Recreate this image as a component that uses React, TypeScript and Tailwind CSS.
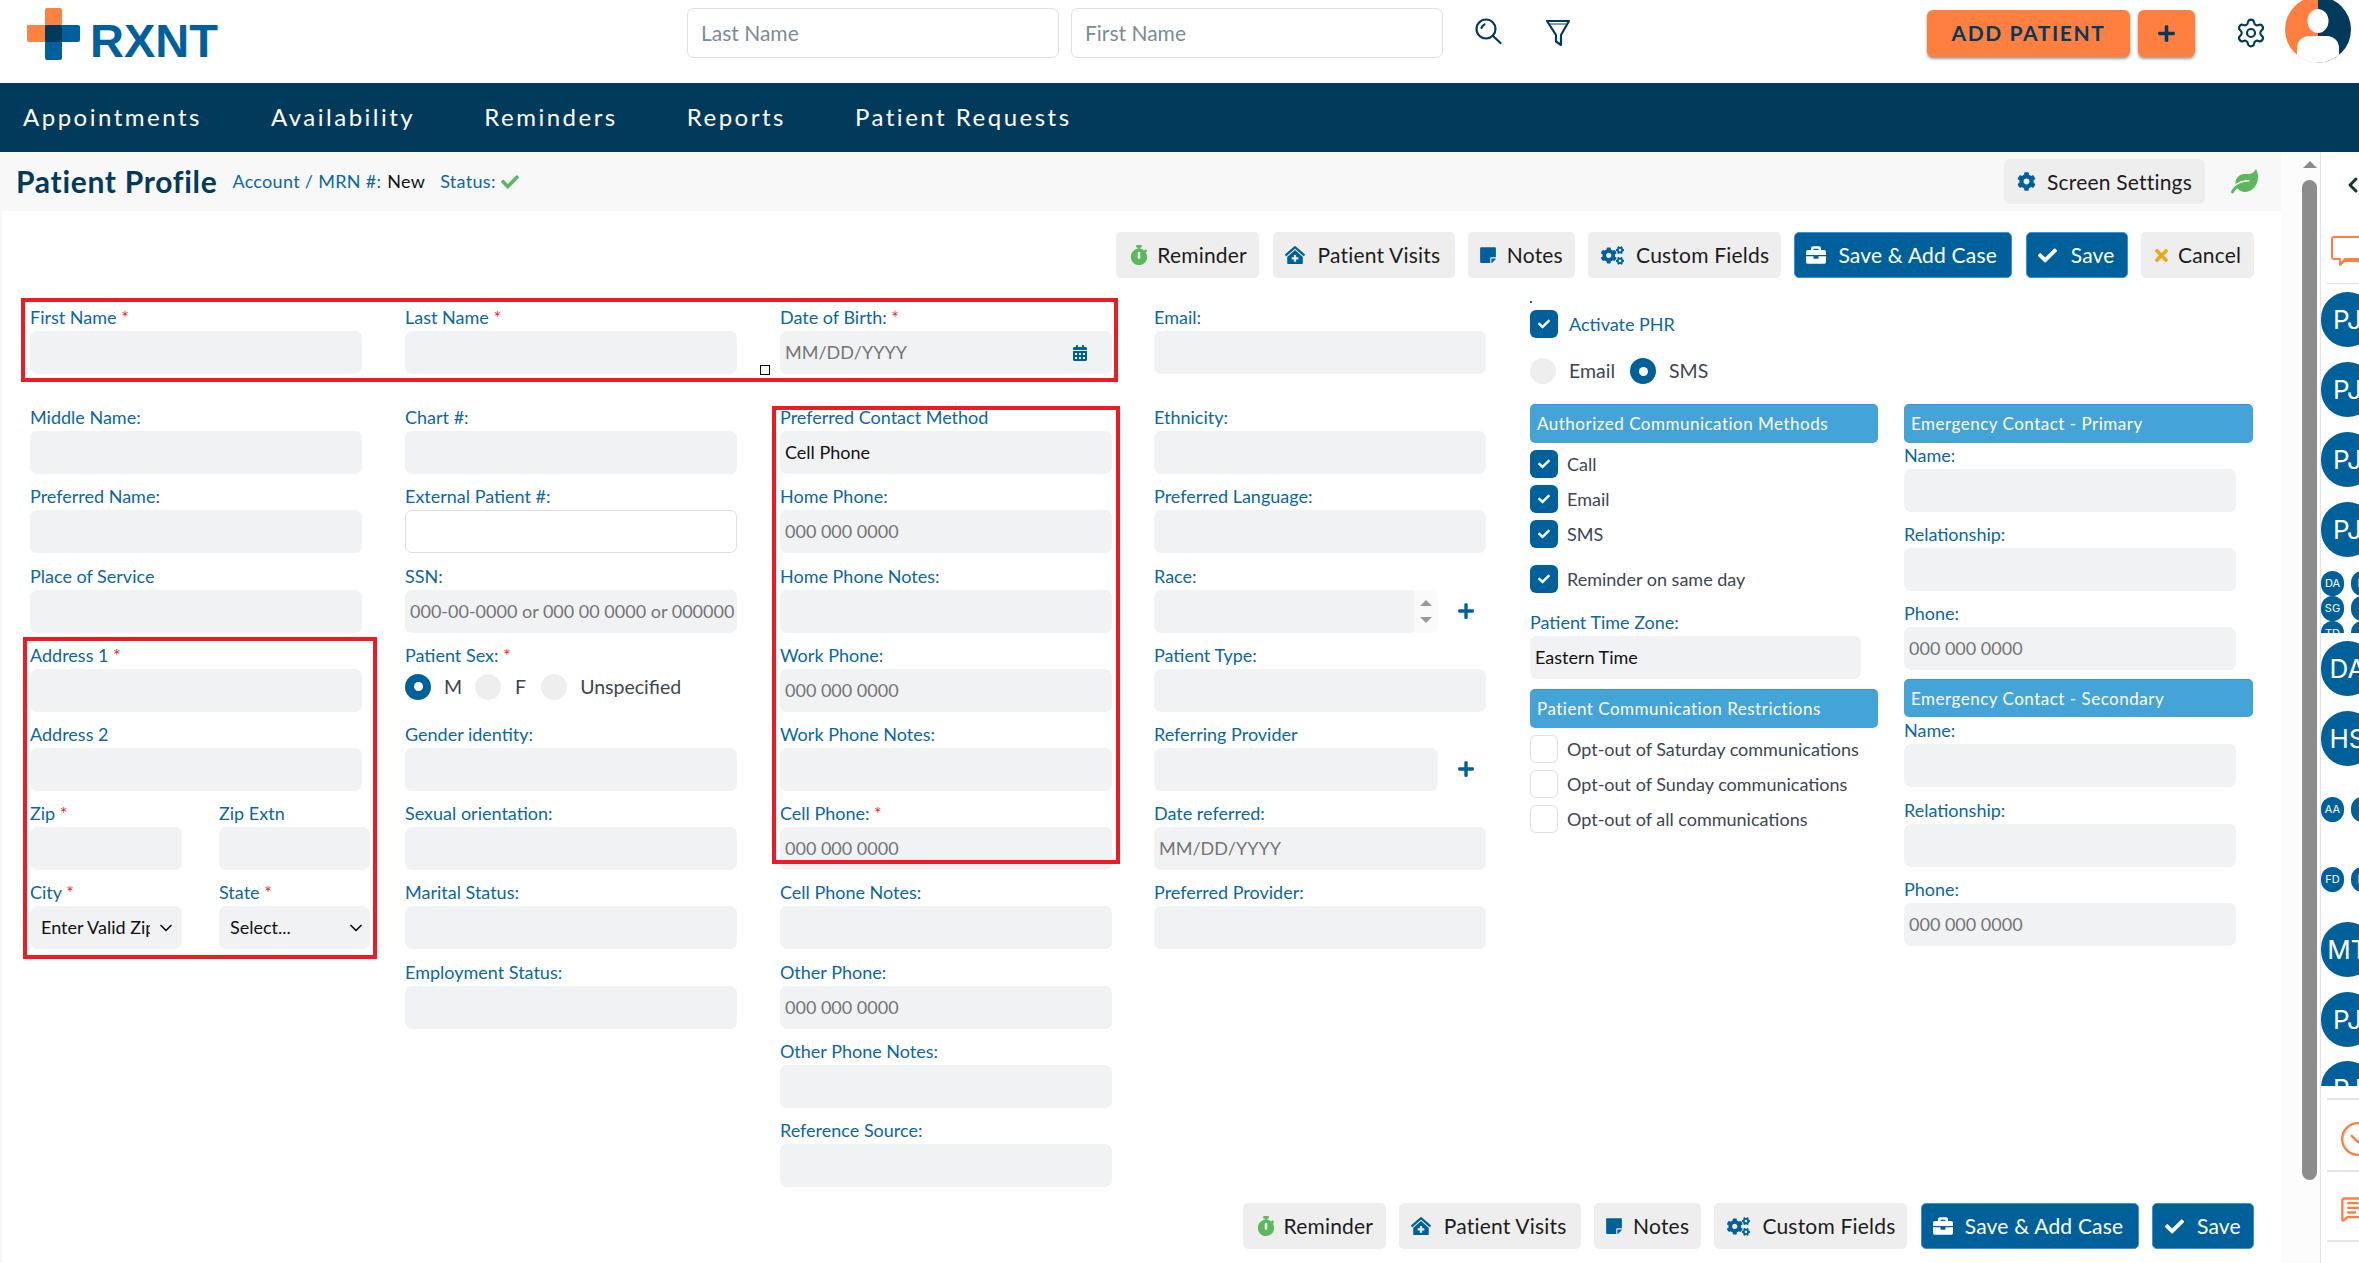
import React from "react";
import { FaStopwatch, FaClinicMedical, FaStickyNote, FaCogs, FaBriefcase, FaCheck, FaTimes, FaCog, FaLeaf, FaCalendarAlt, FaPlus } from "react-icons/fa";
import { Settings, ChevronDown, ChevronLeft, CircleChevronDown, MessageSquareText } from "lucide-react";

const BLUE = "text-[#0b67a3]";

function Label({ text, req }: { text: string; req?: boolean }) {
  return (
    <div className={`h-[25px] text-[18px] leading-[23px] whitespace-nowrap ${BLUE}`}>
      {text}
      {req && <span className="text-[#f0202c]"> *</span>}
    </div>
  );
}

function Box({ ph, value, white, className = "", children }: { ph?: string; value?: string; white?: boolean; className?: string; children?: React.ReactNode }) {
  return (
    <div className={`h-[43px] rounded-[7px] flex items-center px-[5px] overflow-hidden whitespace-nowrap text-[18px] ${white ? "bg-white border border-[#dcdfe3]" : "bg-[#f1f2f4]"} ${value ? "text-[#111]" : "text-[#757575]"} ${className}`}>
      {value || ph}
      {children}
    </div>
  );
}

type F = { label: string; req?: boolean; ph?: string; value?: string; white?: boolean };

function Field({ f, width = "w-full" }: { f: F; width?: string }) {
  return (
    <div className="h-[79.2px]">
      <Label text={f.label} req={f.req} />
      <Box ph={f.ph} value={f.value} white={f.white} className={width} />
    </div>
  );
}

const PHONE = "000 000 0000";

const col2: F[] = [
  { label: "Chart #:" },
  { label: "External Patient #:", white: true },
];
const col2b: F[] = [{ label: "Gender identity:" }, { label: "Sexual orientation:" }, { label: "Marital Status:" }, { label: "Employment Status:" }];
const col3: F[] = [
  { label: "Preferred Contact Method", value: "Cell Phone" },
  { label: "Home Phone:", ph: PHONE },
  { label: "Home Phone Notes:" },
  { label: "Work Phone:", ph: PHONE },
  { label: "Work Phone Notes:" },
  { label: "Cell Phone:", req: true, ph: PHONE },
  { label: "Cell Phone Notes:" },
  { label: "Other Phone:", ph: PHONE },
  { label: "Other Phone Notes:" },
  { label: "Reference Source:" },
];

function Radio({ on }: { on?: boolean }) {
  return (
    <span className={`w-[26px] h-[26px] rounded-full flex items-center justify-center shrink-0 ${on ? "bg-[#00619a]" : "bg-[#eeeeee]"}`}>
      {on && <span className="w-[9px] h-[9px] rounded-full bg-white" />}
    </span>
  );
}

function Check({ on, label, blue }: { on?: boolean; label: string; blue?: boolean }) {
  return (
    <div className={`h-[28px] flex items-center ${blue ? "gap-[11px]" : "gap-[9px]"}`}>
      <span className={`w-[28px] h-[28px] rounded-[6px] flex items-center justify-center shrink-0 ${on ? "bg-[#00619a]" : "bg-white border border-[#dcdfe3]"}`}>
        {on && <FaCheck className="text-white text-[12px]" />}
      </span>
      <span className={`text-[18px] whitespace-nowrap ${blue ? BLUE : "text-[#3c4650]"}`}>{label}</span>
    </div>
  );
}

function SectionHead({ text, className = "" }: { text: string; className?: string }) {
  return (
    <div className={`h-[39px] rounded-[5px] bg-[#44a4d8] border-t border-[#3b97cb] flex items-center pl-[7px] text-white text-[17px] tracking-[0.5px] whitespace-nowrap ${className}`}>
      {text}
    </div>
  );
}

function Btn({ cls, icon, text, primary }: { cls: string; icon: React.ReactNode; text: string; primary?: boolean }) {
  return (
    <button className={`${cls} h-[46px] rounded-[5px] flex items-center text-[21px] tracking-[0.2px] whitespace-nowrap ${primary ? "bg-[#00619a] border border-[#3f8fe0] text-white" : "bg-[#eeeeee] text-[#1c1c1c]"}`}>
      <span className="w-[24px] flex justify-center shrink-0">{icon}</span>
      {text}
    </button>
  );
}

function Actions({ cancel }: { cancel?: boolean }) {
  return (
    <div className="flex justify-end gap-[13.3px] pr-[27px]">
      <Btn cls="w-[143px] pl-[11px] gap-[6px]" icon={<FaStopwatch className="text-[#5cb85c] text-[20px]" />} text="Reminder" />
      <Btn cls="w-[182px] pl-[10px] gap-[11px]" icon={<FaClinicMedical className="text-[#00619a] text-[20px]" />} text="Patient Visits" />
      <Btn cls="w-[107px] pl-[8px] gap-[7px]" icon={<FaStickyNote className="text-[#00619a] text-[18px]" />} text="Notes" />
      <Btn cls="w-[193px] pl-[12px] gap-[12px]" icon={<FaCogs className="text-[#00619a] text-[23px]" />} text="Custom Fields" />
      <Btn cls="w-[218px] pl-[9px] gap-[10px]" primary icon={<FaBriefcase className="text-white text-[20px]" />} text="Save &amp; Add Case" />
      <Btn cls="w-[102px] pl-[9px] gap-[11px]" primary icon={<FaCheck className="text-white text-[19px]" />} text="Save" />
      {cancel && <Btn cls="w-[113px] pl-[8px] gap-[5px]" icon={<FaTimes className="text-[#eea51b] text-[19px]" />} text="Cancel" />}
    </div>
  );
}

function BigAv({ t, clip }: { t: string; clip?: boolean }) {
  return (
    <div className={`${clip ? "h-[25px] overflow-hidden" : "h-[55px]"} w-[53px] shrink-0`}>
      <div className="w-[53px] h-[55px] rounded-full bg-[#00619a] text-white text-[26px] flex items-center justify-center font-['Inter',sans-serif]">{t}</div>
    </div>
  );
}

function SmallAv({ t }: { t: string }) {
  return <div className="w-[23px] h-[25px] rounded-full bg-[#00619a] text-white text-[11px] flex items-center justify-center shrink-0 font-['Inter',sans-serif]">{t}</div>;
}

function SmallRow({ a, b, mb = "" }: { a: string; b: string; mb?: string }) {
  return (
    <div className={`flex gap-[7px] ${mb}`}>
      <SmallAv t={a} />
      <SmallAv t={b} />
    </div>
  );
}

export default function App() {
  return (
    <div className="w-[2359px] h-[1263px] overflow-hidden bg-white flex flex-col font-['Lato','Noto_Sans',sans-serif]">
      {/* top bar */}
      <header className="h-[83px] shrink-0 bg-white pt-[8px]">
        <div className="h-[50px] flex items-center">
          <div className="w-[687px] self-start flex items-start pl-[27px] shrink-0">
            <svg width="53" height="52" viewBox="0 0 53 52">
              <path d="M18 2a2 2 0 0 1 2-2h13a2 2 0 0 1 2 2v32H2a2 2 0 0 1-2-2V17h18z" fill="#ff8243" />
              <path d="M18 17h33a2 2 0 0 1 2 2v13a2 2 0 0 1-2 2H35v16a2 2 0 0 1-2 2H20a2 2 0 0 1-2-2z" fill="#00619a" />
              <rect x="18" y="17" width="17" height="17" rx="3" fill="#04395c" />
            </svg>
            <span className="ml-[10px] mt-[11px] text-[47px] leading-[44px] font-bold text-[#00619a] font-['Liberation_Sans',sans-serif]">RXNT</span>
          </div>
          <Box ph="Last Name" white className="w-[372px] !h-[50px] !px-[13px] !text-[21px] !text-[#7c8b97] mr-[12px]" />
          <Box ph="First Name" white className="w-[372px] !h-[50px] !px-[13px] !text-[21px] !text-[#7c8b97]" />
          <svg className="ml-[31px] shrink-0" width="30" height="30" viewBox="0 0 30 30" fill="none" stroke="#023a5c" strokeWidth="2.2" strokeLinecap="round">
            <circle cx="12" cy="11" r="9.5" />
            <path d="M7.5 10a5 5 0 0 1 3-3.5" />
            <path d="M19 18l7.5 7" />
          </svg>
          <svg className="ml-[42px] shrink-0" width="24" height="30" viewBox="0 0 24 30" fill="none" stroke="#023a5c" strokeWidth="2.2" strokeLinejoin="round">
            <path d="M1 3h22l-8 14v10l-5-3.500V17z" />
            <path d="M4 6h16" strokeWidth="1" />
          </svg>
          <button className="ml-[357px] w-[203px] h-[47px] rounded-[6px] bg-[#ff7f41] shadow-[0_2px_3px_rgba(0,0,0,0.4)] text-[#023a5c] text-[21px] font-bold tracking-[1.6px]">ADD PATIENT</button>
          <button className="ml-[8px] w-[57px] h-[47px] rounded-[6px] bg-[#ff7f41] shadow-[0_2px_3px_rgba(0,0,0,0.4)] flex items-center justify-center text-[#023a5c]"><FaPlus className="text-[19px]" /></button>
          <Settings className="ml-[40px] text-[#023a5c]" size={32} strokeWidth={1.6} />
          <svg className="ml-[18px] self-start mt-[-12px] shrink-0" width="66" height="67" viewBox="0 0 66 67">
            <defs>
              <clipPath id="av"><circle cx="33" cy="33.5" r="33" /></clipPath>
            </defs>
            <g clipPath="url(#av)">
              <rect width="33" height="67" fill="#ff7f41" />
              <rect x="33" width="33" height="67" fill="#023a5c" />
              <ellipse cx="33" cy="25" rx="10.500" ry="12" fill="#fff" />
              <rect x="12" y="40" width="42" height="30" rx="12" fill="#fff" />
            </g>
          </svg>
        </div>
      </header>

      {/* nav */}
      <nav className="h-[69px] shrink-0 bg-[#023a5c] flex items-center pl-[23px] pb-[1px] gap-[69px] text-white text-[24px] tracking-[2.5px]">
        {["Appointments", "Availability", "Reminders", "Reports", "Patient Requests"].map((t) => (
          <span key={t} className="whitespace-nowrap">{t}</span>
        ))}
      </nav>

      <div className="flex-1 flex min-h-0">
        {/* main */}
        <div className="w-[2281px] shrink-0 flex flex-col bg-[#f8f8f8]">
          <div className="h-[59px] shrink-0 flex items-center pl-[16px] pr-[23px]">
            <span className="text-[30px] font-bold text-[#023a5c] tracking-[0.7px] whitespace-nowrap">Patient Profile</span>
            <span className={`ml-[15px] text-[18px] tracking-[0.3px] whitespace-nowrap ${BLUE}`}>Account / MRN #:</span>
            <span className="ml-[6px] text-[18px] tracking-[0.3px] text-[#111]">New</span>
            <span className={`ml-[15px] text-[18px] tracking-[0.3px] ${BLUE}`}>Status:</span>
            <FaCheck className="ml-[5px] text-[#5cb85c] text-[18px]" />
            <div className="ml-auto flex items-center gap-[26px]">
              <button className="w-[201px] h-[45px] rounded-[6px] bg-[#eeeeee] flex items-center pl-[13px] gap-[11px] text-[21px] tracking-[0.2px] text-[#1c1c1c] whitespace-nowrap">
                <FaCog className="text-[#00619a] text-[19px]" />
                Screen Settings
              </button>
              <FaLeaf className="text-[#5cb85c] text-[27px]" />
            </div>
          </div>

          <div className="flex-1 ml-[2px] bg-white flex flex-col justify-between pt-[21px] pb-[14px] relative">
            <div>
              <Actions cancel />
              <div className="mt-[28px] pl-[28px] flex items-start">
                {/* col 1 */}
                <div className="w-[332px] mr-[43px] shrink-0">
                  <div className="mb-[21px] h-[79.2px]"><Label text="First Name" req /><Box /></div>
                  <Field f={{ label: "Middle Name:" }} />
                  <Field f={{ label: "Preferred Name:" }} />
                  <Field f={{ label: "Place of Service" }} />
                  <Field f={{ label: "Address 1", req: true }} />
                  <Field f={{ label: "Address 2" }} />
                  <div className="flex gap-[37px] w-[340px]">
                    <div className="w-[152px]">
                      <Field f={{ label: "Zip", req: true }} />
                      <div className="h-[79.2px]">
                        <Label text="City" req />
                        <Box value="Enter Valid Zip" className="!pl-[11px] !pr-0 justify-between">
                          <ChevronDown size={20} className="shrink-0 text-[#111] -ml-[16px] bg-[#f1f2f4] w-[32px]" />
                        </Box>
                      </div>
                    </div>
                    <div className="w-[151px]">
                      <Field f={{ label: "Zip Extn" }} />
                      <div className="h-[79.2px]">
                        <Label text="State" req />
                        <Box value="Select..." className="!pl-[11px] !pr-[4px] justify-between">
                          <ChevronDown size={20} className="shrink-0 text-[#111]" />
                        </Box>
                      </div>
                    </div>
                  </div>
                </div>

                {/* col 2 */}
                <div className="w-[332px] mr-[43px] shrink-0">
                  <div className="mb-[21px] h-[79.2px]"><Label text="Last Name" req /><Box /></div>
                  {col2.map((f) => <Field key={f.label} f={f} />)}
                  <Field f={{ label: "SSN:", ph: "000-00-0000 or 000 00 0000 or 000000" }} />
                  <div className="h-[79.2px]">
                    <Label text="Patient Sex:" req />
                    <div className="mt-[5px] h-[26px] flex items-center text-[19.5px] text-[#3c4650]">
                      <Radio on /><span className="ml-[13px]">M</span>
                      <span className="ml-[13px]"><Radio /></span><span className="ml-[14px]">F</span>
                      <span className="ml-[15px]"><Radio /></span><span className="ml-[13px]">Unspecified</span>
                    </div>
                  </div>
                  {col2b.map((f) => <Field key={f.label} f={f} />)}
                </div>

                {/* col 3 */}
                <div className="w-[332px] mr-[42px] shrink-0">
                  <div className="mb-[21px] h-[79.2px]">
                    <Label text="Date of Birth:" req />
                    <Box ph="MM/DD/YYYY" className="justify-between !pr-[24px]">
                      <FaCalendarAlt className="text-[#00619a] text-[16px]" />
                    </Box>
                  </div>
                  {col3.map((f) => <Field key={f.label} f={f} />)}
                </div>

                {/* col 4 */}
                <div className="w-[332px] mr-[44px] shrink-0">
                  <div className="mb-[21px] h-[79.2px]"><Label text="Email:" /><Box /></div>
                  <Field f={{ label: "Ethnicity:" }} />
                  <Field f={{ label: "Preferred Language:" }} />
                  <div className="h-[79.2px]">
                    <Label text="Race:" />
                    <div className="flex items-center">
                      <Box className="w-[284px] justify-end !pr-0">
                        <span className="w-[24px] h-full bg-[#fafafa] flex flex-col items-center justify-center gap-[11px]">
                          <span className="w-0 h-0 border-x-[6px] border-x-transparent border-b-[6px] border-b-[#999999]" />
                          <span className="w-0 h-0 border-x-[6px] border-x-transparent border-t-[6px] border-t-[#999999]" />
                        </span>
                      </Box>
                      <FaPlus className="ml-[19px] text-[#00619a] text-[18px]" />
                    </div>
                  </div>
                  <Field f={{ label: "Patient Type:" }} />
                  <div className="h-[79.2px]">
                    <Label text="Referring Provider" />
                    <div className="flex items-center">
                      <Box className="w-[284px]" />
                      <FaPlus className="ml-[19px] text-[#00619a] text-[18px]" />
                    </div>
                  </div>
                  <Field f={{ label: "Date referred:", ph: "MM/DD/YYYY" }} />
                  <Field f={{ label: "Preferred Provider:" }} />
                </div>

                {/* col 5 */}
                <div className="w-[348px] mr-[26px] shrink-0 pt-[4px]">
                  <Check on blue label="Activate PHR" />
                  <div className="mt-[20px] h-[26px] flex items-center text-[19.5px] text-[#3c4650]">
                    <Radio /><span className="ml-[13px]">Email</span>
                    <span className="ml-[15px]"><Radio on /></span><span className="ml-[13px]">SMS</span>
                  </div>
                  <SectionHead text="Authorized Communication Methods" className="mt-[20px]" />
                  <div className="mt-[7px] flex flex-col gap-[7px]">
                    <Check on label="Call" />
                    <Check on label="Email" />
                    <Check on label="SMS" />
                  </div>
                  <div className="mt-[17px]"><Check on label="Reminder on same day" /></div>
                  <div className="mt-[18px]"><Label text="Patient Time Zone:" /></div>
                  <Box value="Eastern Time" className="w-[331px]" />
                  <SectionHead text="Patient Communication Restrictions" className="mt-[10px]" />
                  <div className="mt-[7px] flex flex-col gap-[7px]">
                    <Check label="Opt-out of Saturday communications" />
                    <Check label="Opt-out of Sunday communications" />
                    <Check label="Opt-out of all communications" />
                  </div>
                </div>

                {/* col 6 */}
                <div className="w-[349px] shrink-0 pt-[98px]">
                  <SectionHead text="Emergency Contact - Primary" />
                  <div className="w-[332px] mt-[1px]">
                    <Field f={{ label: "Name:" }} />
                    <Field f={{ label: "Relationship:" }} />
                    <div className="h-[77px]"><Label text="Phone:" /><Box ph={PHONE} /></div>
                  </div>
                  <SectionHead text="Emergency Contact - Secondary" className="!h-[38px]" />
                  <div className="w-[332px] mt-[2px]">
                    <Field f={{ label: "Name:" }} />
                    <Field f={{ label: "Relationship:" }} />
                    <Field f={{ label: "Phone:", ph: PHONE }} />
                  </div>
                </div>
              </div>
            </div>

            <Actions />

            {/* annotation rectangles laid over the form */}
            <div className="absolute left-[19px] top-[87px] w-[1097px] h-[84px] border-[4px] border-[#ed1c24] pointer-events-none" />
            <div className="absolute left-[770px] top-[195px] w-[348px] h-[458px] border-[4px] border-[#ed1c24] pointer-events-none" />
            <div className="absolute left-[21px] top-[426px] w-[354px] h-[322px] border-[4px] border-[#ed1c24] pointer-events-none" />
            <div className="absolute left-[758px] top-[154px] w-[10px] h-[10px] border border-black bg-white" />
            <div className="absolute left-[1528px] top-[90px] w-[2px] h-[2px] bg-[#0b67a3]" />
          </div>
        </div>

        {/* scrollbar */}
        <div className="w-[39px] shrink-0 bg-[#fcfcfc] flex flex-col items-end pr-[3px] pt-[9px]">
          <div className="w-[15px] flex justify-center">
            <span className="w-0 h-0 border-x-[7px] border-x-transparent border-b-[7px] border-b-[#8c8c8c]" />
          </div>
          <div className="w-[15px] mt-[12px] h-[1000px] rounded-full bg-[#8c8c8c]" />
        </div>

        {/* right rail */}
        <aside className="w-[39px] shrink-0 border-l border-[#e4e4e4] bg-white flex flex-col overflow-hidden">
          <div className="pt-[21px] pl-[20px] h-[84px]">
            <ChevronLeft size={24} strokeWidth={3} className="text-[#0e3b2c]" />
          </div>
          <div className="h-[47px] pl-[10px]">
            <svg width="36" height="34" viewBox="0 0 36 34" fill="none" stroke="#ff7f41" strokeWidth="2" strokeLinejoin="round">
              <path d="M3 1h30v22H14l-5 6v-6H3a2 2 0 0 1-2-2V3a2 2 0 0 1 2-2z" />
              <path d="M9 29l4-4h14l8 6" />
            </svg>
          </div>
          <div className="ml-[5px] w-[40px] h-[1px] bg-[#e0e0e0] shrink-0" />
          <div className="mt-[8px] h-[794px] overflow-hidden flex flex-col shrink-0">
            <BigAv t="PJ" />
            <div className="mt-[15px]"><BigAv t="PJ" /></div>
            <div className="mt-[15px]"><BigAv t="PJ" /></div>
            <div className="mt-[15px]"><BigAv t="PJ" /></div>
            <div className="mt-[14px] h-[63px] overflow-hidden">
              <SmallRow a="DA" b="M" />
              <SmallRow a="SG" b="S" />
              <SmallRow a="TD" b="" />
            </div>
            <div className="mt-[8px]"><BigAv t="DA" /></div>
            <div className="mt-[15px]"><BigAv t="HS" /></div>
            <div className="mt-[31px]"><SmallRow a="AA" b="H" /></div>
            <div className="mt-[45px]"><SmallRow a="FD" b="M" /></div>
            <div className="mt-[30px]"><BigAv t="MT" /></div>
            <div className="mt-[15px]"><BigAv t="PJ" /></div>
            <div className="mt-[14px]"><BigAv t="PJ" clip /></div>
          </div>
          <div className="mt-[12px] ml-[6px] w-[40px] h-[2px] bg-[#e6e6e6] shrink-0" />
          <div className="h-[70px] pl-[18px] pt-[20px] shrink-0">
            <CircleChevronDown size={38} strokeWidth={1.5} className="text-[#ff7f41]" />
          </div>
          <div className="ml-[6px] w-[40px] h-[2px] bg-[#e6e6e6] shrink-0" />
          <div className="h-[68px] pl-[19px] pt-[23px] shrink-0">
            <MessageSquareText size={28} strokeWidth={2} className="text-[#ff7f41]" />
          </div>
          <div className="ml-[6px] w-[40px] h-[2px] bg-[#e6e6e6] shrink-0" />
        </aside>
      </div>
    </div>
  );
}
